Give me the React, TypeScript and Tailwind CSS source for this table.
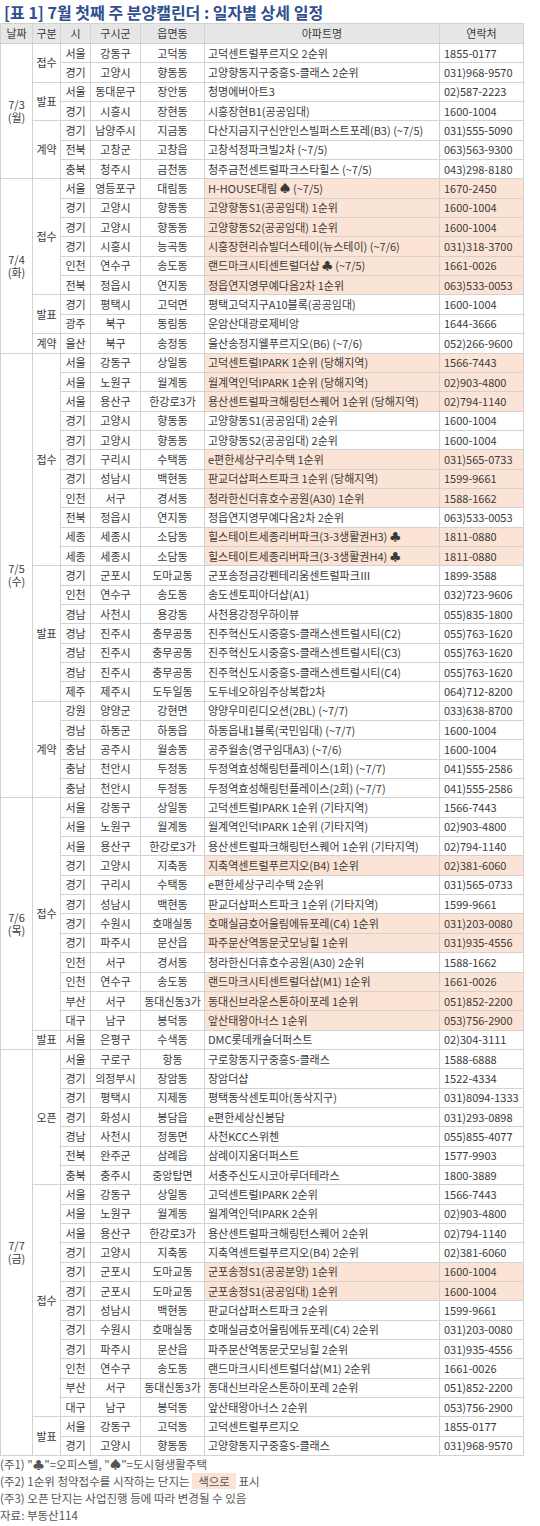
import React from "react";

type Group = { d: string; w: string; g: [string, string[]][] };

// rows: 시|구시군|읍면동|아파트명|연락처 (and |* when the row is highlighted)
const data: Group[] = [
  {
    d: "7/3",
    w: "(월)",
    g: [
      ["접수", [
        "서울|강동구|고덕동|고덕센트럴푸르지오 2순위|1855-0177",
        "경기|고양시|향동동|고양향동지구중흥S-클래스 2순위|031)968-9570",
      ]],
      ["발표", [
        "서울|동대문구|장안동|청명에버아트3|02)587-2223",
        "경기|시흥시|장현동|시흥장현B1(공공임대)|1600-1004",
      ]],
      ["계약", [
        "경기|남양주시|지금동|다산지금지구신안인스빌퍼스트포레(B3) (~7/5)|031)555-5090",
        "전북|고창군|고창읍|고창석정파크빌2차 (~7/5)|063)563-9300",
        "충북|청주시|금천동|청주금천센트럴파크스타힐스 (~7/5)|043)298-8180",
      ]],
    ],
  },
  {
    d: "7/4",
    w: "(화)",
    g: [
      ["접수", [
        "서울|영등포구|대림동|H-HOUSE대림 ♠ (~7/5)|1670-2450|*",
        "경기|고양시|향동동|고양향동S1(공공임대) 1순위|1600-1004|*",
        "경기|고양시|향동동|고양향동S2(공공임대) 1순위|1600-1004|*",
        "경기|시흥시|능곡동|시흥장현리슈빌더스테이(뉴스테이) (~7/6)|031)318-3700|*",
        "인천|연수구|송도동|랜드마크시티센트럴더샵 ♣ (~7/5)|1661-0026|*",
        "전북|정읍시|연지동|정읍연지영무예다음2차 1순위|063)533-0053|*",
      ]],
      ["발표", [
        "경기|평택시|고덕면|평택고덕지구A10블록(공공임대)|1600-1004",
        "광주|북구|동림동|운암산대광로제비앙|1644-3666",
      ]],
      ["계약", [
        "울산|북구|송정동|울산송정지웰푸르지오(B6) (~7/6)|052)266-9600",
      ]],
    ],
  },
  {
    d: "7/5",
    w: "(수)",
    g: [
      ["접수", [
        "서울|강동구|상일동|고덕센트럴IPARK 1순위 (당해지역)|1566-7443|*",
        "서울|노원구|월계동|월계역인덕IPARK 1순위 (당해지역)|02)903-4800|*",
        "서울|용산구|한강로3가|용산센트럴파크해링턴스퀘어 1순위 (당해지역)|02)794-1140|*",
        "경기|고양시|향동동|고양향동S1(공공임대) 2순위|1600-1004",
        "경기|고양시|향동동|고양향동S2(공공임대) 2순위|1600-1004",
        "경기|구리시|수택동|e편한세상구리수택 1순위|031)565-0733|*",
        "경기|성남시|백현동|판교더샵퍼스트파크 1순위 (당해지역)|1599-9661|*",
        "인천|서구|경서동|청라한신더휴호수공원(A30) 1순위|1588-1662|*",
        "전북|정읍시|연지동|정읍연지영무예다음2차 2순위|063)533-0053",
        "세종|세종시|소담동|힐스테이트세종리버파크(3-3생활권H3) ♣|1811-0880|*",
        "세종|세종시|소담동|힐스테이트세종리버파크(3-3생활권H4) ♣|1811-0880|*",
      ]],
      ["발표", [
        "경기|군포시|도마교동|군포송정금강펜테리움센트럴파크Ⅲ|1899-3588",
        "인천|연수구|송도동|송도센토피아더샵(A1)|032)723-9606",
        "경남|사천시|용강동|사천용강정우하이뷰|055)835-1800",
        "경남|진주시|충무공동|진주혁신도시중흥S-클래스센트럴시티(C2)|055)763-1620",
        "경남|진주시|충무공동|진주혁신도시중흥S-클래스센트럴시티(C3)|055)763-1620",
        "경남|진주시|충무공동|진주혁신도시중흥S-클래스센트럴시티(C4)|055)763-1620",
        "제주|제주시|도두일동|도두네오하임주상복합2차|064)712-8200",
      ]],
      ["계약", [
        "강원|양양군|강현면|양양우미린디오션(2BL) (~7/7)|033)638-8700",
        "경남|하동군|하동읍|하동읍내1블록(국민임대) (~7/7)|1600-1004",
        "충남|공주시|월송동|공주월송(영구임대A3) (~7/6)|1600-1004",
        "충남|천안시|두정동|두정역효성해링턴플레이스(1회) (~7/7)|041)555-2586",
        "충남|천안시|두정동|두정역효성해링턴플레이스(2회) (~7/7)|041)555-2586",
      ]],
    ],
  },
  {
    d: "7/6",
    w: "(목)",
    g: [
      ["접수", [
        "서울|강동구|상일동|고덕센트럴IPARK 1순위 (기타지역)|1566-7443",
        "서울|노원구|월계동|월계역인덕IPARK 1순위 (기타지역)|02)903-4800",
        "서울|용산구|한강로3가|용산센트럴파크해링턴스퀘어 1순위 (기타지역)|02)794-1140",
        "경기|고양시|지축동|지축역센트럴푸르지오(B4) 1순위|02)381-6060|*",
        "경기|구리시|수택동|e편한세상구리수택 2순위|031)565-0733",
        "경기|성남시|백현동|판교더샵퍼스트파크 1순위 (기타지역)|1599-9661",
        "경기|수원시|호매실동|호매실금호어울림에듀포레(C4) 1순위|031)203-0080|*",
        "경기|파주시|문산읍|파주문산역동문굿모닝힐 1순위|031)935-4556|*",
        "인천|서구|경서동|청라한신더휴호수공원(A30) 2순위|1588-1662",
        "인천|연수구|송도동|랜드마크시티센트럴더샵(M1) 1순위|1661-0026|*",
        "부산|서구|동대신동3가|동대신브라운스톤하이포레 1순위|051)852-2200|*",
        "대구|남구|봉덕동|앞산태왕아너스 1순위|053)756-2900|*",
      ]],
      ["발표", [
        "서울|은평구|수색동|DMC롯데캐슬더퍼스트|02)304-3111",
      ]],
    ],
  },
  {
    d: "7/7",
    w: "(금)",
    g: [
      ["오픈", [
        "서울|구로구|항동|구로항동지구중흥S-클래스|1588-6888",
        "경기|의정부시|장암동|장암더샵|1522-4334",
        "경기|평택시|지제동|평택동삭센토피아(동삭지구)|031)8094-1333",
        "경기|화성시|봉담읍|e편한세상신봉담|031)293-0898",
        "경남|사천시|정동면|사천KCC스위첸|055)855-4077",
        "전북|완주군|삼례읍|삼례이지움더퍼스트|1577-9903",
        "충북|충주시|중앙탑면|서충주신도시코아루더테라스|1800-3889",
      ]],
      ["접수", [
        "서울|강동구|상일동|고덕센트럴IPARK 2순위|1566-7443",
        "서울|노원구|월계동|월계역인덕IPARK 2순위|02)903-4800",
        "서울|용산구|한강로3가|용산센트럴파크해링턴스퀘어 2순위|02)794-1140",
        "경기|고양시|지축동|지축역센트럴푸르지오(B4) 2순위|02)381-6060",
        "경기|군포시|도마교동|군포송정S1(공공분양) 1순위|1600-1004|*",
        "경기|군포시|도마교동|군포송정S1(공공임대) 1순위|1600-1004|*",
        "경기|성남시|백현동|판교더샵퍼스트파크 2순위|1599-9661",
        "경기|수원시|호매실동|호매실금호어울림에듀포레(C4) 2순위|031)203-0080",
        "경기|파주시|문산읍|파주문산역동문굿모닝힐 2순위|031)935-4556",
        "인천|연수구|송도동|랜드마크시티센트럴더샵(M1) 2순위|1661-0026",
        "부산|서구|동대신동3가|동대신브라운스톤하이포레 2순위|051)852-2200",
        "대구|남구|봉덕동|앞산태왕아너스 2순위|053)756-2900",
      ]],
      ["발표", [
        "서울|강동구|고덕동|고덕센트럴푸르지오|1855-0177",
        "경기|고양시|향동동|고양향동지구중흥S-클래스|031)968-9570",
      ]],
    ],
  },
];

const cell = "border border-[#d2d2d2] p-0 whitespace-nowrap overflow-hidden";

function Rows() {
  const out: React.ReactNode[] = [];
  data.forEach((grp) => {
    const total = grp.g.reduce((n, [, r]) => n + r.length, 0);
    grp.g.forEach(([label, rows], gi) => {
      rows.forEach((line, ri) => {
        const [si, gu, dong, apt, tel, mark] = line.split("|");
        const hl = mark === "*";
        out.push(
          <tr key={`${grp.d}-${label}-${ri}`} className="h-[19.35px]">
            {gi === 0 && ri === 0 && (
              <td rowSpan={total} className={`${cell} text-center align-middle leading-[13px]`}>
                {grp.d}
                <br />
                {grp.w}
              </td>
            )}
            {ri === 0 && (
              <td rowSpan={rows.length} className={`${cell} text-center align-middle`}>
                {label}
              </td>
            )}
            <td className={`${cell} text-center`}>{si}</td>
            <td className={`${cell} text-center`}>{gu}</td>
            <td className={`${cell} text-center`}>{dong}</td>
            <td className={`${cell} pl-[3px] ${hl ? "bg-[#fbe4d6]" : ""}`}>{apt}</td>
            <td className={`${cell} pl-[4px] ${hl ? "bg-[#fbe4d6]" : ""}`}>{tel}</td>
          </tr>
        );
      });
    });
  });
  return <>{out}</>;
}

export default function App() {
  return (
    <div className="w-[540px] bg-white text-[#3a3a3a] font-['Noto_Sans_CJK_KR',sans-serif]">
      <h1 className="h-[23px] pl-[4px] pt-[2px] text-[16px] leading-[20px] font-bold text-[#2f4f8f]">
        [표 1] 7월 첫째 주 분양캘린더 : 일자별 상세 일정
      </h1>
      <table className="w-[523px] table-fixed border-collapse text-[11px] leading-none">
        <colgroup>
          <col className="w-[32px]" />
          <col className="w-[28px]" />
          <col className="w-[30px]" />
          <col className="w-[50px]" />
          <col className="w-[64px]" />
          <col className="w-[235px]" />
          <col className="w-[84px]" />
        </colgroup>
        <thead>
          <tr className="h-[20px] bg-[#e6e6e6]">
            {["날짜", "구분", "시", "구시군", "읍면동", "아파트명", "연락처"].map((h) => (
              <th key={h} className={`${cell} text-center font-normal`}>
                {h}
              </th>
            ))}
          </tr>
        </thead>
        <tbody>
          <Rows />
        </tbody>
      </table>
      <div className="text-[11.5px] leading-[17px] text-[#555555]">
        <p>(주1) "♣"=오피스텔, "♠"=도시형생활주택</p>
        <p>
          (주2) 1순위 청약접수를 시작하는 단지는{" "}
          <span className="bg-[#fbe4d6] px-[6px]">색으로</span> 표시
        </p>
        <p>(주3) 오픈 단지는 사업진행 등에 따라 변경될 수 있음</p>
        <p>자료: 부동산114</p>
      </div>
    </div>
  );
}
